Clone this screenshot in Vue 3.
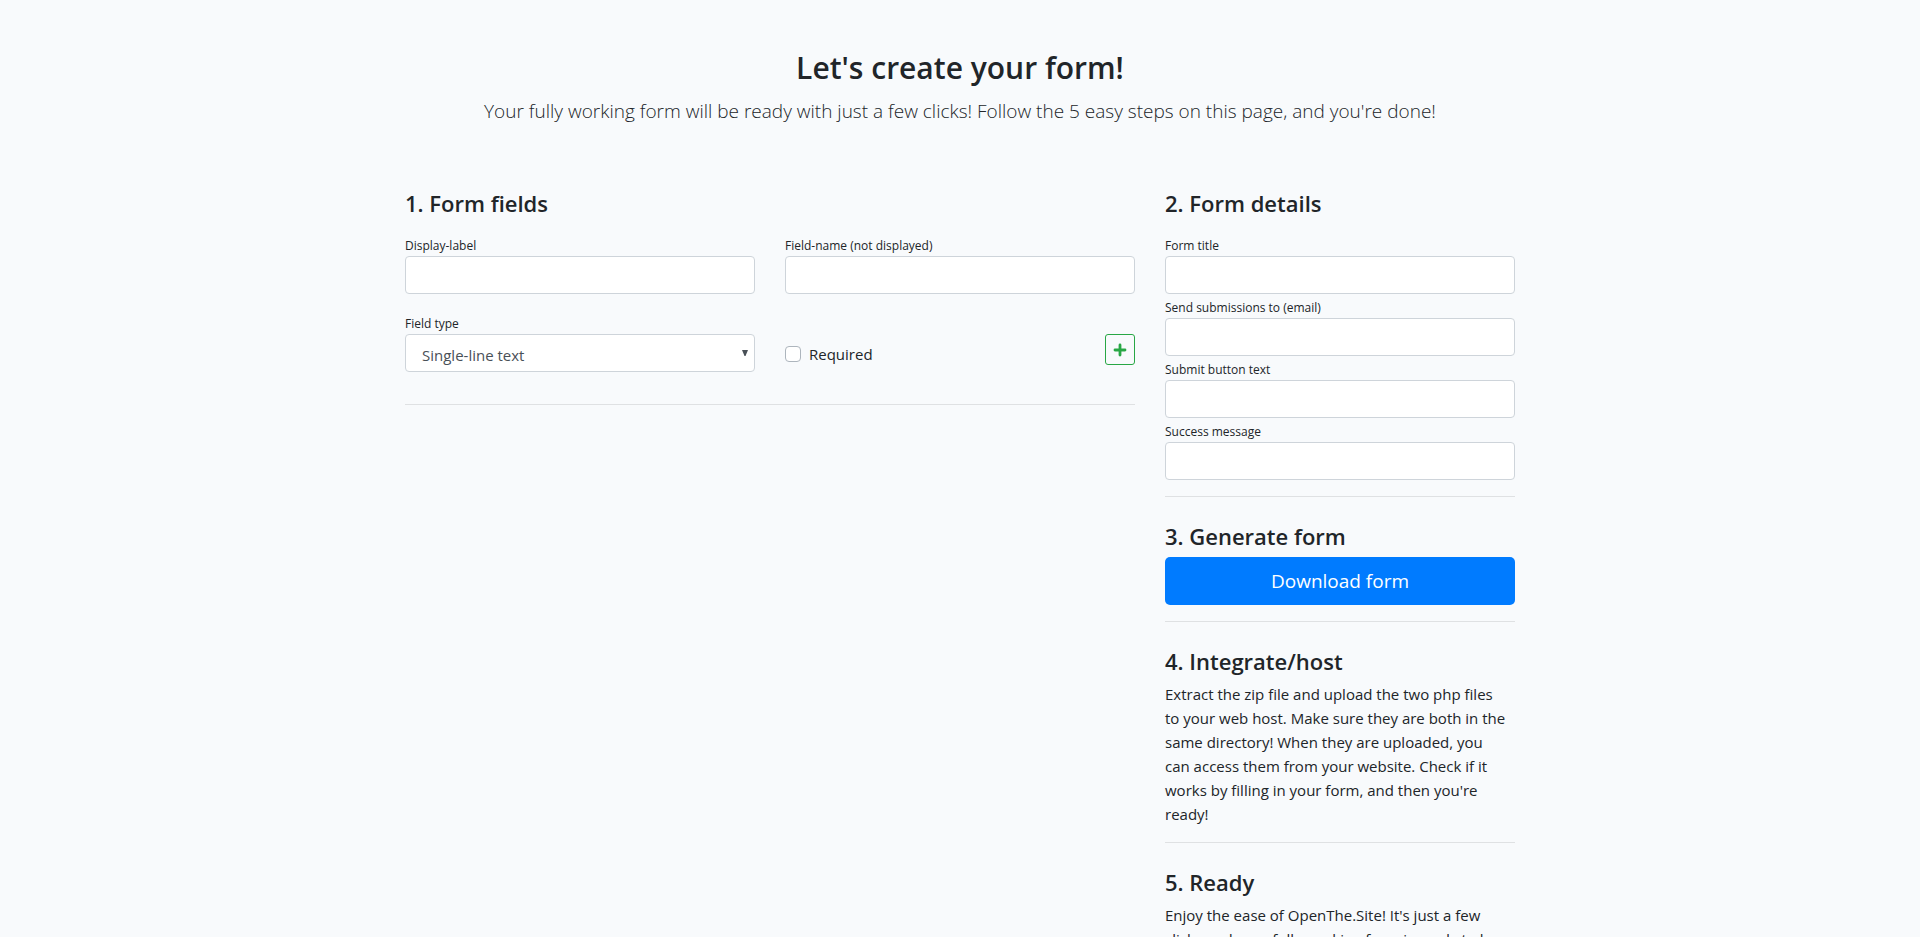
<template>
  <main class="page">
    <header class="intro">
      <h2>Let's create your form!</h2>
      <p class="lead">
        Your fully working form will be ready with just a few clicks! Follow the 5 easy steps on this page, and you're done!
      </p>
    </header>

    <div class="columns">
      <!-- Field builder -->
      <section class="fields">
        <h4 class="spaced">1. Form fields</h4>
        <form class="field-grid" @submit.prevent="addField">
          <div class="group">
            <label for="display-label">Display-label</label>
            <input id="display-label" v-model="field.label" class="control" type="text">
          </div>
          <div class="group">
            <label for="field-name">Field-name (not displayed)</label>
            <input id="field-name" v-model="field.name" class="control" type="text">
          </div>
          <div class="group">
            <label for="field-type">Field type</label>
            <div class="select-wrap">
              <select id="field-type" v-model="field.type" class="control">
                <option v-for="type in fieldTypes" :key="type" :value="type">{{ type }}</option>
              </select>
              <svg class="arrow" width="6" height="6" viewBox="0 0 6 6" aria-hidden="true">
                <path d="M0 0h6L3.5 6h-1z" fill="#495057" />
              </svg>
            </div>
          </div>
          <div class="options">
            <label class="check" for="required">
              <input id="required" v-model="field.required" type="checkbox">
              Required
            </label>
            <button class="add" type="submit" aria-label="Add field">
              <svg width="14" height="14" viewBox="0 0 14 14" aria-hidden="true">
                <path d="M7 2v10M2 7h10" fill="none" stroke="currentColor" stroke-width="2.8" stroke-linecap="round" />
              </svg>
            </button>
          </div>
        </form>
        <hr>
        <ul v-if="fields.length" class="added">
          <li v-for="(item, index) in fields" :key="index">{{ item.label }} ({{ item.type }})</li>
        </ul>
      </section>

      <!-- Remaining steps -->
      <aside>
        <section>
          <h4 class="spaced">2. Form details</h4>
          <div v-for="detail in details" :key="detail.id" class="group">
            <label :for="detail.id">{{ detail.label }}</label>
            <input :id="detail.id" v-model="detail.value" class="control" :type="detail.type">
          </div>
        </section>
        <hr>
        <section>
          <h4>3. Generate form</h4>
          <button class="download" type="button">Download form</button>
        </section>
        <hr>
        <section>
          <h4>4. Integrate/host</h4>
          <p class="step-text">
            Extract the zip file and upload the two php files to your web host. Make sure they are both in the same directory! When they are uploaded, you can access them from your website. Check if it works by filling in your form, and then you're ready!
          </p>
        </section>
        <hr>
        <section>
          <h4>5. Ready</h4>
          <p class="step-text">
            Enjoy the ease of OpenThe.Site! It's just a few clicks and your fully working form is ready to be used.
          </p>
        </section>
      </aside>
    </div>
  </main>
</template>

<script setup>
import { reactive, ref } from 'vue'

const fieldTypes = ['Single-line text', 'Multi-line text', 'Email', 'Number']

const field = reactive({
  label: '',
  name: '',
  type: 'Single-line text',
  required: false
})

const fields = ref([])

const details = reactive([
  { id: 'form-title', label: 'Form title', type: 'text', value: '' },
  { id: 'send-to', label: 'Send submissions to (email)', type: 'email', value: '' },
  { id: 'submit-text', label: 'Submit button text', type: 'text', value: '' },
  { id: 'success-message', label: 'Success message', type: 'text', value: '' }
])

const addField = () => {
  if (!field.label) return
  fields.value.push({ ...field })
  field.label = ''
  field.name = ''
  field.required = false
}
</script>

<style>
body {
  margin: 0;
  background: #f8fafc;
}
</style>

<style scoped>
.page {
  box-sizing: border-box;
  max-width: 1140px;
  margin: 0 auto;
  padding: 48px 15px;
  color: #212529;
  font-family: "Segoe UI", "Open Sans", "Noto Sans", sans-serif;
  font-size: 15px;
  line-height: 24px;
}

h2,
h4,
p {
  margin: 0;
}

h2 {
  margin-bottom: 8px;
  font-size: 30px;
  font-weight: 600;
  line-height: 40px;
}

h4 {
  margin-bottom: 6px;
  font-size: 22px;
  font-weight: 600;
  line-height: 30px;
}

h4.spaced {
  margin-bottom: 14px;
}

hr {
  margin: 16px 0 24px;
  border: 0;
  border-top: 1px solid #dfe1e3;
}

.intro {
  margin-bottom: 62px;
  text-align: center;
}

.lead {
  font-size: 19px;
  font-weight: 300;
  line-height: 30px;
}

.columns {
  display: grid;
  grid-template-columns: minmax(0, 730fr) minmax(0, 350fr);
  gap: 30px;
}

.field-grid {
  display: grid;
  grid-template-columns: repeat(2, minmax(0, 1fr));
  gap: 16px 30px;
}

.fields hr {
  margin-top: 32px;
}

.group label {
  display: block;
  padding-top: 4px;
  font-size: 12px;
  line-height: 20px;
}

.control {
  display: block;
  box-sizing: border-box;
  width: 100%;
  height: 38px;
  padding: 6px 12px;
  border: 1px solid #ced4da;
  border-radius: 4px;
  background: #fff;
  color: #495057;
  font: inherit;
}

select.control {
  padding: 8px 16px 6px;
  appearance: none;
}

.select-wrap {
  position: relative;
}

.arrow {
  position: absolute;
  top: 16px;
  right: 7px;
  pointer-events: none;
}

.options {
  display: flex;
  align-items: flex-start;
  justify-content: space-between;
  padding-top: 24px;
}

.check {
  display: flex;
  align-items: center;
  gap: 8px;
  padding-top: 8px;
}

.check input {
  box-sizing: border-box;
  width: 16px;
  height: 16px;
  margin: 0;
  border: 1px solid #adb5bd;
  border-radius: 4px;
  background: #fff;
  appearance: none;
}

.check input:checked {
  border-color: #007bff;
  background: #007bff;
}

.add {
  display: flex;
  align-items: center;
  justify-content: center;
  box-sizing: border-box;
  width: 30px;
  height: 31px;
  padding: 0;
  border: 1px solid #28a745;
  border-radius: 3px;
  background: transparent;
  color: #28a745;
  cursor: pointer;
}

.download {
  display: block;
  width: 100%;
  height: 48px;
  padding: 0 16px;
  border: 0;
  border-radius: 5px;
  background: #007bff;
  color: #fff;
  font: inherit;
  font-size: 19px;
  cursor: pointer;
}

.step-text {
  padding-right: 6px;
}

.added {
  margin: 0;
  padding-left: 20px;
}

@media (max-width: 767px) {
  .columns,
  .field-grid {
    grid-template-columns: minmax(0, 1fr);
  }
}
</style>
